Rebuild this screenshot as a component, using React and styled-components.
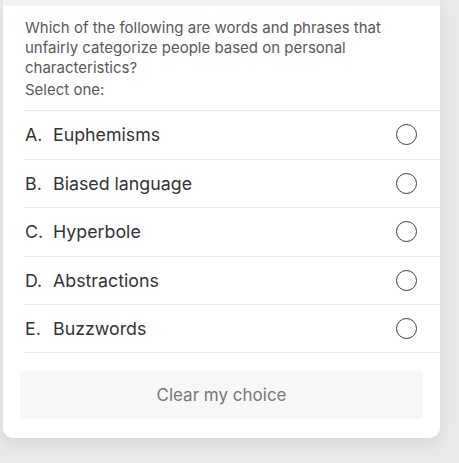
import styled, { createGlobalStyle } from "styled-components";

const Global = createGlobalStyle`
  html, body {
    margin: 0;
    padding: 0;
    background: #e9e9e9;
  }
  body {
    font-family: "Inter", "Liberation Sans", sans-serif;
    -webkit-font-smoothing: antialiased;
  }
`;

const Page = styled.div`
  width: 459px;
  height: 463px;
  padding-left: 3px;
  box-sizing: border-box;
  background: #e9e9e9;
`;

const Card = styled.div`
  width: 437px;
  background: #ffffff;
  border-radius: 0 0 10px 10px;
  box-shadow: 0 6px 14px rgba(0, 0, 0, 0.07);
  padding-bottom: 19px;
  overflow: hidden;
`;

const TopStrip = styled.div`
  height: 6px;
  background: #f2f2f2;
`;

const Question = styled.div`
  padding: 12px 40px 10px 22px;
  font-size: 15px;
  line-height: 20px;
  color: #595959;
`;

const Prompt = styled.div`
  margin-top: 2px;
`;

const Options = styled.ul`
  list-style: none;
  margin: 0 0 0 22px;
  padding: 0;
`;

const Option = styled.li`
  display: flex;
  align-items: center;
  height: 48.6px;
  box-sizing: border-box;
  border-top: 1px solid #e8e8e8;
  border-bottom: ${(p) => (p.$last ? "1px solid #e8e8e8" : "none")};
  padding-right: 23px;
  font-size: 17.8px;
  color: #333333;
`;

const Letter = styled.span`
  width: 28px;
  flex: none;
`;

const Label = styled.span`
  flex: 1;
`;

const Radio = styled.span`
  width: 21px;
  height: 21px;
  border: 1.4px solid #3d3d3d;
  border-radius: 50%;
  box-sizing: border-box;
`;

const ClearButton = styled.button`
  display: block;
  margin: 18px 0 0 17px;
  width: 403px;
  height: 48px;
  border: none;
  border-radius: 4px;
  background: #f7f7f7;
  color: #777777;
  font-family: inherit;
  font-size: 17px;
`;

const options = [
  ["A.", "Euphemisms"],
  ["B.", "Biased language"],
  ["C.", "Hyperbole"],
  ["D.", "Abstractions"],
  ["E.", "Buzzwords"],
];

export default function App() {
  return (
    <>
      <Global />
      <Page>
        <Card>
          <TopStrip />
          <Question>
            Which of the following are words and phrases that unfairly
            categorize people based on personal characteristics?
            <Prompt>Select one:</Prompt>
          </Question>
          <Options>
            {options.map(([letter, label], i) => (
              <Option key={letter} $last={i === options.length - 1}>
                <Letter>{letter}</Letter>
                <Label>{label}</Label>
                <Radio />
              </Option>
            ))}
          </Options>
          <ClearButton>Clear my choice</ClearButton>
        </Card>
      </Page>
    </>
  );
}
